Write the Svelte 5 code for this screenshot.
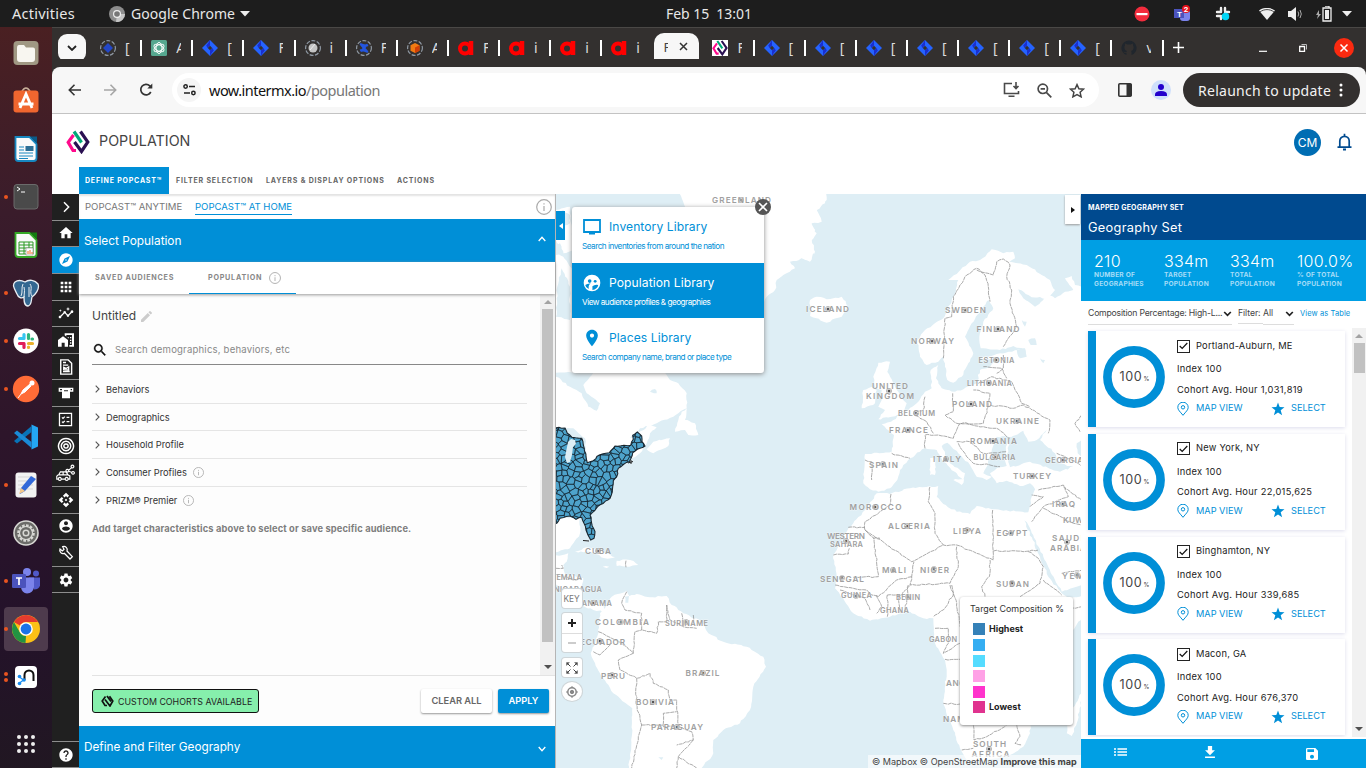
<script>
  let seed = 7;
  const rnd = () => {
    seed = (seed * 16807) % 2147483647;
    return seed / 2147483647 - 0.5;
  };

  // Turns "x,y x,y ..." in thirds of a pixel from an origin into an irregular coastline.
  function trace([ox, oy], text, amp = 1.6, closed = true) {
    const pts = text.trim().split(/\s+/).map((p) => {
      const [x, y] = p.split(',').map(Number);
      return [ox + x / 3, oy + y / 3];
    });
    const out = [];
    const n = closed ? pts.length : pts.length - 1;
    for (let i = 0; i < n; i++) {
      const a = pts[i];
      const b = pts[(i + 1) % pts.length];
      const k = Math.max(1, Math.round(Math.hypot(b[0] - a[0], b[1] - a[1]) / 3));
      out.push(a);
      for (let j = 1; j < k; j++) {
        const t = j / k;
        out.push([a[0] + (b[0] - a[0]) * t + rnd() * amp, a[1] + (b[1] - a[1]) * t + rnd() * amp]);
      }
    }
    if (!closed) out.push(pts[pts.length - 1]);
    return 'M' + out.map((p) => p[0].toFixed(1) + ' ' + p[1].toFixed(1)).join('L') + (closed ? 'Z' : '');
  }

  const NW = [550, 190];
  const NE = [810, 190];
  const SW = [550, 470];
  const SE = [810, 470];

  const land = [
    [NW, '385,0 825,0 830,30 800,60 815,95 785,100 800,130 780,160 795,190 760,205 720,215 735,235 700,255 680,270 675,300 650,320 630,350 600,380 560,330 500,200 420,120 405,50'],
    [NE, '0,10 40,15 45,40 20,60 15,90 0,100 15,120 5,150 15,185 0,215 -40,200 -60,20'],
    [NW, '0,180 40,200 70,240 120,400 345,548 360,570 385,580 410,610 410,655 370,680 320,700 270,715 240,745 300,705 320,712 300,730 290,760 270,790 200,830 120,860 0,860'],
    [NW, '18,60 60,50 70,180 40,190 18,150'],
    [NW, '375,725 395,665 410,655 405,690 435,700 445,735 415,735 405,720'],
    [NW, '290,778 310,755 360,745 355,768 310,790'],
    [NE, '0,330 20,320 50,328 95,320 115,350 95,380 50,398 0,378'],
    [NE, '205,518 240,515 232,545 240,560 255,590 275,625 290,640 282,670 245,680 205,688 225,660 205,650 215,630 215,600 195,590 190,560'],
    [NE, '185,590 200,600 195,640 155,655 160,600'],
    [NE, '415,270 440,252 480,215 510,210 545,178 580,190 610,185 615,205 598,215 650,225 720,270 735,300 715,325 665,322 625,298 640,325 675,350 700,330 705,308 735,325 765,305 790,300 765,265 785,258 795,285 815,290 815,900 680,905 660,880 630,888 590,872 560,880 540,850 560,835 590,828 585,800 590,765 605,740 560,740 530,830 520,850 545,860 530,870 500,860 480,825 445,790 412,758 395,768 420,820 465,850 460,870 440,850 400,815 380,780 345,775 300,805 270,840 262,870 240,895 205,905 180,898 160,880 165,792 245,785 252,735 215,703 250,690 285,665 320,640 345,605 365,595 362,540 385,525 378,565 395,595 435,605 500,580 510,540 540,530 560,510 510,505 560,492 640,478 610,468 570,480 512,475 508,440 520,395 550,355 535,330 520,350 485,400 465,440 490,490 475,520 455,560 430,578 412,570 405,530 400,500 385,515 350,525 330,500 322,450 345,420 400,385 430,320 445,270'],
    [SE, '200,70 240,72 300,55 385,48 380,80 400,102 440,125 480,132 500,108 545,118 655,127 665,80 680,45 760,20 815,0 815,345 755,365 735,330 700,260 655,165 640,145 690,260 715,320 755,370 775,385 815,378 815,440 785,490 700,600 665,700 660,790 640,830 600,855 520,872 470,870 450,835 430,780 400,700 410,610 405,570 375,520 370,445 340,445 300,425 240,440 180,452 130,430 75,355 80,320 70,255 115,175 165,120'],
    [SE, '770,745 770,790 785,798 800,760 815,690 815,670'],
    [NE, '360,805 375,805 375,855 360,855'],
    [NE, '430,870 462,868 455,885'],
    [SW, '160,420 185,380 230,362 238,378 260,372 300,382 350,378 365,405 400,430 455,455 475,490 520,515 590,530 640,560 648,590 610,650 600,720 570,760 520,780 490,810 490,850 455,894 235,910 245,800 247,715 190,670 150,610 130,570 122,550 145,490 150,430'],
    [SW, '0,262 55,250 50,275 40,285 45,312 100,325 90,370 100,395 130,400 165,400 160,425 130,420 80,400 30,350 0,330'],
    [SW, '75,245 110,232 150,240 195,262 165,265 120,245'],
    [SW, '200,272 240,270 265,285 230,290 200,288'],
    [SW, '158,290 178,290 170,294'],
    [SW, '0,140 90,145 90,190 60,235 0,250']
  ].map(([o, t]) => trace(o, t));

  const water = [
    [NW, '18,548 130,548 100,585 110,610 150,640 140,662 115,650 95,610 60,590 18,560'],
    [NW, '18,70 40,60 60,75 60,100 35,110'],
    [NW, '18,165 30,160 40,190 18,195'],
    [NW, '35,235 60,290 60,390 18,380 22,290'],
    [NW, '38,712 70,715 105,745 112,800 70,745 45,730'],
    [NW, '300,605 315,597 320,610'],
    [NE, '600,745 640,722 655,755 680,750 710,720 690,750 735,790 745,820 790,830 750,845 660,815 600,832 590,800'],
    [NE, '620,480 645,475 650,500 630,505'],
    [NE, '655,450 675,445 680,465 662,465'],
    [NE, '635,390 650,395 645,410'],
    [NE, '690,505 705,510 700,520'],
    [SW, '225,380 237,378 235,398 226,398'],
    [SW, '325,862 340,862 335,870'],
    [NE, '800,760 815,750 815,800 803,790']
  ].map(([o, t]) => trace(o, t));

  const borders = [
    [NE, '400,505 405,385 425,380 430,320 450,285 470,255 500,235 525,255 535,290 540,335'],
    [NE, '500,240 550,255 560,215 580,207 600,225 590,260 605,300 600,340 620,410 580,470'],
    [NE, '345,775 345,735 385,735 430,745 450,700 520,710 560,715 600,745'],
    [NE, '345,620 340,660 310,670 330,685 350,695 370,730'],
    [NE, '428,610 430,665 405,675 440,700 520,700 535,650 540,610 490,600'],
    [NE, '540,645 610,655 640,645 720,690 715,730'],
    [NE, '505,580 545,560 605,575 635,640 660,650'],
    [NE, '520,530 575,535 590,565'],
    [NE, '440,755 480,755 520,790 590,785'],
    [NE, '445,760 470,800 490,820 540,825 570,830'],
    [NE, '245,790 300,805'],
    [NE, '165,810 185,815 185,870'],
    [NE, '740,790 790,810 815,830'],
    [NE, '580,495 580,535 560,550'],
    [NE, '815,675 795,700 810,725'],
    [SE, '243,72 240,105 165,155 165,180 305,275 400,225 375,190 375,130 355,95 360,50'],
    [SE, '115,172 165,172'],
    [SE, '70,255 115,252 118,235'],
    [SE, '165,180 192,205 205,320 130,322'],
    [SE, '190,205 210,205'],
    [SE, '548,120 550,270 540,265 440,225 400,225'],
    [SE, '550,243 650,244 685,240'],
    [SE, '540,270 538,320 515,350 525,380'],
    [SE, '440,230 445,290 420,340 300,345 305,320 312,275'],
    [SE, '305,320 260,330 205,380 185,375 170,360 130,355 75,345'],
    [SE, '420,345 430,375 400,420 370,440'],
    [SE, '232,375 232,440'],
    [SE, '265,375 270,430'],
    [SE, '295,345 290,400 283,425'],
    [SE, '232,375 275,375 300,345'],
    [SE, '375,475 415,475 415,520 400,550 450,520'],
    [SE, '405,568 450,568'],
    [SE, '400,700 450,702'],
    [SE, '490,765 492,810 530,800 590,765'],
    [SE, '455,840 490,835'],
    [SE, '620,765 630,800 615,820 635,825'],
    [SE, '685,60 760,45 775,80 700,110 665,155'],
    [SE, '660,110 700,80 665,75'],
    [SE, '700,115 790,160 815,165'],
    [SE, '655,245 685,265 700,290 690,340 630,380'],
    [SE, '700,330 755,375'],
    [SE, '755,310 815,300'],
    [SE, '760,50 815,90'],
    [SE, '780,415 815,410'],
    [SE, '90,360 130,375 165,385 180,420'],
    [SE, '200,375 215,410 200,430'],
    [SE, '425,345 440,400 450,470'],
    [SW, '230,365 215,400 225,420 275,430 275,480 320,490 325,455 350,455 350,405'],
    [SW, '350,405 360,450 400,470 440,475'],
    [SW, '395,430 400,470'],
    [SW, '430,435 428,465'],
    [SW, '145,485 185,505 230,530 250,550 255,485 275,480'],
    [SW, '130,545 150,555 185,520'],
    [SW, '250,550 205,570 210,600 260,625 300,610 310,640 355,660 360,690 380,690 385,765 340,770 340,730 380,725'],
    [SW, '260,625 258,700 275,765 265,800 245,894'],
    [SW, '275,765 340,765'],
    [SW, '380,765 425,785 430,810 380,825'],
    [SW, '430,810 385,860 440,894'],
    [SW, '385,860 380,894'],
    [SW, '18,295 40,295 35,285'],
    [SW, '50,320 70,330 95,325'],
    [SW, '228,272 228,292']
  ].map(([o, t]) => trace(o, t, 1.4, false));

  const usa = trace(NW, '0,712 45,714 52,730 66,742 95,745 100,765 108,800 112,818 130,812 148,795 178,788 195,768 242,766 250,748 248,736 262,726 275,738 276,755 285,768 262,778 248,788 243,805 238,815 222,822 205,835 200,860 190,872 188,890 184,915 180,925 145,948 120,975 125,1000 135,1025 132,1045 122,1050 108,1020 102,1000 95,982 78,988 60,978 30,985 20,1000 0,992', 1.2);

  // County mesh: Voronoi cells around shaken lattice sites.
  const mesh = (() => {
    const sites = [];
    for (let r = 0; r < 23; r++)
      for (let c = 0; c < 18; c++) sites.push([548 + (c + (r % 2) / 2) * 6.2 + rnd() * 6, 422 + r * 5.8 + rnd() * 5.5]);
    let d = '';
    for (const s of sites) {
      let poly = [[s[0] - 8, s[1] - 8], [s[0] + 8, s[1] - 8], [s[0] + 8, s[1] + 8], [s[0] - 8, s[1] + 8]];
      for (const t of sites) {
        const dx = t[0] - s[0];
        const dy = t[1] - s[1];
        if (t === s || dx * dx + dy * dy > 500) continue;
        const side = (p) => (p[0] - (s[0] + t[0]) / 2) * dx + (p[1] - (s[1] + t[1]) / 2) * dy;
        const next = [];
        for (let i = 0; i < poly.length; i++) {
          const a = poly[i];
          const b = poly[(i + 1) % poly.length];
          const fa = side(a);
          const fb = side(b);
          if (fa <= 0) next.push(a);
          if (fa * fb < 0) next.push([a[0] + ((b[0] - a[0]) * fa) / (fa - fb), a[1] + ((b[1] - a[1]) * fa) / (fa - fb)]);
        }
        poly = next;
      }
      if (poly.length > 2) d += 'M' + poly.map((p) => p[0].toFixed(1) + ' ' + p[1].toFixed(1)).join('L') + 'Z';
    }
    return d;
  })();

  // name, left, baseline, width, marker x, marker y
  const labels = [
    ['GREENLAND', 712, 203, 59, 741, 200], ['ICELAND', 806, 312, 43, 828, 309], ['SWEDEN', 945, 312.5, 41, 965, 310],
    ['FINLAND', 976.5, 331.5, 43, 998, 329], ['NORWAY', 911, 344, 43, 932, 341], ['ESTONIA', 978.5, 362.5, 36, 996, 360, 1],
    ['LITHUANIA', 967, 385.5, 45, 989, 383, 1], ['UNITED', 872, 389, 36], ['KINGDOM', 866, 398.5, 48, 889, 391],
    ['POLAND', 952, 407, 40, 971, 404], ['BELGIUM', 898, 416, 37, 916, 413, 1], ['FRANCE', 889, 432.5, 39, 908, 430],
    ['UKRAINE', 996, 424, 43, 1017, 421], ['ROMANIA', 970, 443.5, 47, 993, 441], ['ITALY', 933, 461.5, 28, 946, 459],
    ['BULGARIA', 973.5, 459.5, 42, 995, 457, 1], ['GEORGIA', 1045, 462.5, 38, 1063, 460, 1], ['SPAIN', 869, 467.5, 29, 883, 464],
    ['TURKEY', 1013, 478.5, 38, 1032, 476], ['IRAQ', 1052, 507, 23, 1063, 504], ['KUWAIT', 1063, 523, 34],
    ['MOROCCO', 849.5, 510, 52, 875, 507], ['ALGERIA', 888, 528.5, 42, 907, 526], ['LIBYA', 953, 533.5, 28, 967, 530],
    ['EGYPT', 996.5, 535.5, 31, 1011, 533], ['WESTERN', 827, 539, 38], ['SAHARA', 830, 547, 33, 846, 541, 1],
    ['SAUDI', 1052, 540.5, 31, 1067, 542], ['ARABIA', 1050, 550.5, 36], ['YEMEN', 1062, 579, 36, 1077, 575],
    ['MALI', 882, 573, 24, 893, 570], ['NIGER', 920, 572.5, 29, 934, 569], ['SENEGAL', 820, 581.5, 44, 842, 578],
    ['SUDAN', 996, 586.5, 33, 1012, 583], ['GUINEA', 841, 598, 31, 856, 596, 1], ['BENIN', 896, 599.5, 24, 908, 597, 1],
    ['GHANA', 880, 613, 29, 0, 0, 1], ['GABON', 929, 641.5, 28, 0, 0, 1], ['ANGOLA', 946, 686, 38], ['NAMIBIA', 943, 722, 42],
    ['SOUTH', 973, 747, 33], ['AFRICA', 971.5, 756.5, 38, 989, 749], ['CUBA', 585, 554, 26, 598, 551],
    ['GUATEMALA', 537, 579.5, 45, 0, 0, 1], ['NICARAGUA', 554, 592, 48, 0, 0, 1], ['PANAMA', 577, 606, 35, 593, 603, 1],
    ['COLOMBIA', 595, 625, 54, 621, 622], ['SURINAME', 665, 625.5, 43, 686, 622, 1], ['ECUADOR', 580, 644.5, 45, 600, 641],
    ['PERU', 601, 678.5, 24, 612, 675], ['BRAZIL', 685.5, 676, 34, 703, 673], ['BOLIVIA', 636, 705, 38, 653, 702], ['PARAGUAY', 651, 730, 52, 677, 727]
  ];

  const jira = (n) => Array.from({ length: n }, () => ['jira', '[']);
  const tabs = [['ring', '['], ['gpt', 'A'], ['jira', '['], ['jira', 'F'], ['globe', 'i'], ['conf', 'F'], ['cube', 'A'], ['a', 'F'], ['a', 'i'], ['a', 'i'], ['a', 'i'], ['active', 'F'], ['imx', 'F'], ...jira(7), ['git', 'v']];

  const dock = [['files', 0], ['store', 0], ['writer', 0], ['term', 1], ['calc', 0], ['pg', 1], ['slack', 1], ['postman', 1], ['code', 0], ['note', 1], ['gear', 0], ['teams', 1], ['chrome', 1], ['neo', 2]];

  const cog = 'M19.14 12.94c.04-.3.06-.61.06-.94 0-.32-.02-.64-.07-.94l2.03-1.58c.18-.14.23-.41.12-.61l-1.92-3.32c-.12-.22-.37-.29-.59-.22l-2.39.96c-.5-.38-1.03-.7-1.62-.94l-.36-2.54c-.04-.24-.24-.41-.48-.41h-3.84c-.24 0-.43.17-.47.41l-.36 2.54c-.59.24-1.13.57-1.62.94l-2.39-.96c-.22-.08-.47 0-.59.22L2.74 8.87c-.12.21-.08.47.12.61l2.03 1.58c-.05.3-.09.63-.09.94s.02.64.07.94l-2.03 1.58c-.18.14-.23.41-.12.61l1.92 3.32c.12.22.37.29.59.22l2.39-.96c.5.38 1.03.7 1.62.94l.36 2.54c.05.24.24.41.48.41h3.84c.24 0 .44-.17.47-.41l.36-2.54c.59-.24 1.13-.56 1.62-.94l2.39.96c.22.08.47 0 .59-.22l1.92-3.32c.12-.22.07-.47-.12-.61l-2.01-1.58zM12 15.6c-1.98 0-3.6-1.62-3.6-3.6s1.62-3.6 3.6-3.6 3.6 1.62 3.6 3.6-1.62 3.6-3.6 3.6z';
  const helpPath = 'M12 2C6.48 2 2 6.48 2 12s4.48 10 10 10 10-4.48 10-10S17.52 2 12 2zm1 17h-2v-2h2v2zm2.07-7.75l-.9.92C13.45 12.9 13 13.5 13 15h-2v-.5c0-1.1.45-2.1 1.17-2.83l1.24-1.26c.37-.36.59-.86.59-1.41 0-1.1-.9-2-2-2s-2 .9-2 2H8c0-2.21 1.79-4 4-4s4 1.79 4 4c0 .88-.36 1.68-.93 2.25z';
  const side = [
    { s: 'M9 5l7 7-7 7' },
    { f: 'M10 20v-6h4v6h5v-8h3L12 3 2 12h3v8z' },
    { on: true, f: 'M12 10.9c-.61 0-1.1.49-1.1 1.1s.49 1.1 1.1 1.1c.61 0 1.1-.49 1.1-1.1s-.49-1.1-1.1-1.1zM12 2C6.48 2 2 6.48 2 12s4.48 10 10 10 10-4.48 10-10S17.52 2 12 2zm2.19 12.19L6 18l3.81-8.19L18 6l-3.81 8.19z' },
    { f: 'M4 8h4V4H4v4zm6 12h4v-4h-4v4zm-6 0h4v-4H4v4zm0-6h4v-4H4v4zm6 0h4v-4h-4v4zm6-10v4h4V4h-4zm-6 4h4V4h-4v4zm6 6h4v-4h-4v4zm0 6h4v-4h-4v4z' },
    { size: 16, f: 'M21 8c-1.45 0-2.26 1.44-1.93 2.51l-3.55 3.56c-.3-.09-.74-.09-1.04 0l-2.55-2.55C12.27 10.45 11.46 9 10 9c-1.45 0-2.27 1.44-1.93 2.52l-4.56 4.55C2.44 15.74 1 16.55 1 18c0 1.1.9 2 2 2 1.45 0 2.26-1.44 1.93-2.51l4.55-4.56c.3.09.74.09 1.04 0l2.55 2.55C12.73 16.55 13.54 18 15 18c1.45 0 2.27-1.44 1.93-2.52l3.56-3.55C21.56 12.26 23 11.45 23 10c0-1.1-.9-2-2-2zM15 9l.94-2.07L18 6l-2.06-.93L15 3l-.92 2.07L12 6l2.08.93zM3.5 11L4 9l2-.5L4 8l-.5-2L3 8l-2 .5L3 9z' },
    { size: 16, f: 'M0 12L7.500 6.500l7.500 5.500V22h-5v-6H5.500v6H0zM10 2v2.800l2.500 1.800V4.500H21v15h-4V22h7V2zM14.500 7.500v1l1.500 1.200V7.500zM18 7.500v2h2v-2zM18 11.500v2h2v-2zM18 15.500v2h2v-2z' },
    { size: 18, s: 'M5 2.500h10l4.500 4.500v14.500H5zM8 6h4M8 9.500h7M8 18h9M9 15.500v-3l3 1.500 3.500-2v4z', w: 1.9 },
    { size: 16, f: 'M1 4h22v6h-5v10H6V10H1zM3 6v2h3V6zM19 6v2h2V6zM9 8v1.500h6V8z' },
    { size: 17, s: 'M3.500 3.500h17v17h-17zM7 9l1.500 1.500L11 8M13.500 9h4M7 15l1.500 1.500L11 14M13.500 15h4', w: 1.8 },
    { size: 18, s: 'M12 2a10 10 0 1 0 .01 0M12 5.800a6.200 6.200 0 1 0 .01 0M12 9.200a2.800 2.800 0 1 0 .01 0', w: 2 },
    { size: 19, s: 'M1 15l2.500-1.500L5.500 10h7l3 4 2 1v4h-2M1 15v4h1.500M7 19h4.500M4.800 17a1.900 1.900 0 1 0 .01 0M13.500 17a1.900 1.900 0 1 0 .01 0M4 13.800h11M9 10v3.500M15.500 8.300l4.500-4M16 9.200l4.500 1.500M14.300 6.800a1.700 1.700 0 1 0 .01 0M20.800 1.500a1.700 1.700 0 1 0 .01 0M21.500 9.500a1.700 1.700 0 1 0 .01 0', w: 1.5 },
    { f: 'M14 12l-2 2-2-2 2-2 2 2zm-2-6l2.120 2.120 2.500-2.500L12 1 7.380 5.620l2.500 2.500L12 6zm-6 6l2.120-2.120-2.500-2.500L1 12l4.620 4.620 2.500-2.500L6 12zm12 0l-2.120 2.120 2.500 2.500L23 12l-4.620-4.620-2.500 2.500L18 12zm-6 6l-2.120-2.120-2.500 2.500L12 23l4.620-4.620-2.500-2.500L12 18z' },
    { f: 'M12 2C6.48 2 2 6.48 2 12s4.48 10 10 10 10-4.48 10-10S17.52 2 12 2zm0 3c1.660 0 3 1.340 3 3s-1.340 3-3 3-3-1.340-3-3 1.340-3 3-3zm0 14.200c-2.500 0-4.710-1.280-6-3.220.030-1.990 4-3.080 6-3.080 1.990 0 5.970 1.090 6 3.080-1.290 1.940-3.500 3.220-6 3.220z' },
    { s: 'M7 2.500a5 5 0 0 1 6.500 6.500l8 8.500-3.500 3.500-8.500-8.500A5 5 0 0 1 3 6l3.500 3L9 6.500z', w: 1.9 },
    { f: cog }
  ];

  const rows = [['Behaviors', 0], ['Demographics', 0], ['Household Profile', 0], ['Consumer Profiles', 1], ['PRIZM® Premier', 1]];
  const stats = [['210', 'NUMBER OF', 'GEOGRAPHIES'], ['334m', 'TARGET', 'POPULATION'], ['334m', 'TOTAL', 'POPULATION'], ['100.0%', '% OF TOTAL', 'POPULATION']];
  const cards = [['Portland-Auburn, ME', '1,031,819'], ['New York, NY', '22,015,625'], ['Binghamton, NY', '339,685'], ['Macon, GA', '676,370']];
  const swatches = ['#3581b8', '#35aef2', '#55dcff', '#ffa1e6', '#ff33cc', '#e0338f'];
  const place = 'M12 2C8.130 2 5 5.130 5 9c0 5.250 7 13 7 13s7-7.750 7-13c0-3.870-3.130-7-7-7zm0 9.500c-1.380 0-2.500-1.120-2.500-2.500s1.120-2.500 2.500-2.500 2.500 1.120 2.500 2.500-1.120 2.500-2.500 2.500z';
</script>

{#snippet info(size)}
  <svg class="info" width={size} height={size} viewBox="0 0 16 16"><circle cx="8" cy="8" r="7.300" /><path d="M8 7v5M8 4.200v1.400" /></svg>
{/snippet}

{#snippet logo(size)}
  <svg width={size} height={size} viewBox="0 0 24 24" fill="none" stroke-width="3.200">
    <path d="M7.500 5L2.200 12.300 7 20.500h3" stroke="#ff0a8c" /><path d="M8 1.500l7.500 11" stroke="#00a878" />
    <path d="M14.500 1.500l7.300 10.500-6.300 9.500-7-9.500" stroke="#2a1052" />
  </svg>
{/snippet}

{#snippet jiraIcon()}
  <svg width="16" height="16" viewBox="0 0 16 16"><path d="M8 0l8 8-8 8-8-8z" fill="#2563ff" /><path d="M8 0v5.500L5.500 8 4.200 5.500 6 3.300zM8 16v-5.500L10.500 8l1.300 2.500-1.800 2.200z" fill="#1a2fd0" /><path d="M8 5.800L10.200 8 8 10.200 5.800 8z" fill="#33302f" /></svg>
{/snippet}

<div class="desktop">
  <div class="topbar">
    <span class="activities">Activities</span>
    <svg class="tc" width="16" height="16" viewBox="0 0 16 16"><circle cx="8" cy="8" r="8" fill="#8d8d8d" /><path d="M8 8h8a8 8 0 0 1-9 8z" fill="#c5c5c5" /><circle cx="8" cy="8" r="4" fill="#eee" /><circle cx="8" cy="8" r="2.800" fill="#777" /></svg>
    <span class="appname">Google Chrome</span>
    <svg width="10" height="6" viewBox="0 0 10 6"><path d="M0 0h10L5 5.500z" fill="#eee" /></svg>
    <span class="clock">Feb 15&nbsp; 13:01</span>
    <div class="tray">
      <svg width="16" height="16" viewBox="0 0 16 16"><circle cx="8" cy="8" r="7.500" fill="#f22c3d" /><path d="M2.500 7h11v2.200h-11z" fill="#fff" /></svg>
      <svg class="t2" width="17" height="17" viewBox="0 0 17 17"><rect x="6" y="5" width="10" height="11" rx="3" fill="#7b83eb" /><rect x="0" y="4" width="10" height="9" fill="#4b53bc" /><text x="3" y="11.500" font-size="8" font-weight="700" fill="#fff">T</text><circle cx="12" cy="4" r="4" fill="#e8121c" /><text x="9.800" y="7" font-size="8" font-weight="700" fill="#fff">2</text></svg>
      <svg class="t3" width="16" height="16" viewBox="0 0 16 16" stroke="#eee" stroke-width="2.400" stroke-linecap="round"><path d="M6 2v4M10 2v3M2 6h3M10 6h4M2 10h4M6 10v3" /><circle cx="10.500" cy="10.500" r="3" fill="#00d5f5" stroke="#00d5f5" stroke-width="1.500" /></svg>
      <svg class="t4" width="16" height="12" viewBox="0 0 16 12"><path d="M0 2.500C4.500-1 11.500-1 16 2.500L8 12z" fill="#eee" /><path d="M1 4C5 .8 11 .8 15 4" fill="none" stroke="#1d1d1d" stroke-width=".8" /></svg>
      <svg class="t5" width="16" height="14" viewBox="0 0 16 14"><path d="M0 4h3l5-4v14l-5-4H0z" fill="#eee" /><path d="M10 4.500q1.500 2.500 0 5M12 3q2.600 4 0 8" fill="none" stroke="#aaa" /></svg>
      <svg class="t6" width="16" height="16" viewBox="0 0 16 16"><path d="M3 4L0 9h2l-1 4 4-5H3z" fill="#aaa" /><path d="M7 2h8v13H7zM9 0h4v2" fill="none" stroke="#eee" stroke-width="1.300" /><path d="M9 4h4v9H9z" fill="#eee" /></svg>
      <svg class="t7" width="10" height="6" viewBox="0 0 10 6"><path d="M0 0h10L5 5.500z" fill="#eee" /></svg>
    </div>
  </div>

  <div class="below">
    <div class="dock">
      {#each dock as [name, dots]}
        <div class="slot" class:current={name === 'chrome'}>
          <span class="dots">{#each Array(dots) as _}<i></i>{/each}</span>
          <svg width="28" height="28" viewBox="0 0 28 28">
            {#if name === 'files'}
              <rect x="1.500" y="2" width="25" height="24" rx="4" fill="#a09883" /><path d="M5 9q0-3 2-3h5l2 2.500h7q2 0 2 2V20q0 3-3 3H8q-3 0-3-3z" fill="#f8f6f0" />
            {:else if name === 'store'}
              <path d="M9.500 5q4.500-8 9 0" fill="none" stroke="#c8b09a" stroke-width="1.500" /><rect x="1.500" y="3.500" width="25" height="22" rx="3" fill="#f0662f" /><path d="M8 21l6-14 6 14M6.500 17h15" fill="none" stroke="#fff" stroke-width="2.800" />
            {:else if name === 'writer' || name === 'calc'}
              <path d="M3.500 2h14l7 7v14q0 3-3 3h-15q-3 0-3-3z" fill="#fafafa" stroke={name === 'writer' ? '#1787c0' : '#35a827'} stroke-width="1.800" /><path d="M18 1.500h7v7z" fill={name === 'writer' ? '#0b5a88' : '#137a10'} />
              {#if name === 'writer'}<path d="M7 12h5M7 15h5M7 18h14M7 21h14M7 23.500h9" stroke="#1787c0" /><rect x="13.500" y="11" width="8" height="5" fill="#2d6f96" />
              {:else}<path d="M7 11h14v12H7zM7 14h14M7 17h14M7 20h14M12 11v12M17 11v12" fill="none" stroke="#2a9a22" /><rect x="14" y="17" width="7" height="7" fill="#fff" stroke="#888" stroke-width=".6" /><path d="M16 23v-3M18 23v-4M20 23v-2" stroke="#f06b22" />{/if}
            {:else if name === 'term'}
              <rect x="2" y="1.500" width="24" height="24.500" rx="3" fill="#4a4a4a" stroke="#6b6b6b" /><path d="M5 4l3 2-3 2M9 9h4" fill="none" stroke="#fff" />
            {:else if name === 'pg'}
              <path d="M3 3c4-3 8-1 10 0 4-3 10-2 13 2 2 5-3 11-6 13-1 3 0 8-4 9-4 0-4-5-4-9-3 2-6 0-7-3C2 9 0 6 3 3z" fill="#336791" stroke="#e8edf2" stroke-width="1.300" /><path d="M11 5c-2 4 0 8-2 12M18 5c3 4-1 8 2 12M12 8q1 2 0 10M17 8v10" fill="none" stroke="#e8edf2" />
            {:else if name === 'slack'}
              <circle cx="14" cy="14" r="12.500" fill="#fff" /><g stroke-width="3.200" stroke-linecap="round"><path d="M12 7.500v4M7.500 11.500h3" stroke="#36c5f0" /><path d="M16.500 7.500v4M20.500 12h-.5" stroke="#2eb67d" /><path d="M16.500 16.500h4M16.500 20.500v-.5" stroke="#ecb22e" /><path d="M7.500 16.500h4M12 20.500v-4" stroke="#e01e5a" /></g>
            {:else if name === 'postman'}
              <circle cx="14" cy="14" r="13.200" fill="#ff6c37" /><circle cx="20" cy="8" r="2.500" fill="#fff" /><path d="M18 9l-7 6-2 4 4-2 6-6zM9 19l-3 4" fill="#fff" stroke="#fff" />
            {:else if name === 'code'}
              <path d="M19.500 1.500L26 4.500v19l-6.500 3z" fill="#24a6f2" /><path d="M19.500 3v6L5 20.500l-3-2.500z" fill="#0873b8" /><path d="M19.500 25v-6L5 7.500 2 10z" fill="#1a8ad6" />
            {:else if name === 'note'}
              <rect x="3.500" y="1.500" width="21" height="25" rx="3" fill="#f2f2f2" /><path d="M6 6h15M6 10h15M6 14h15M6 18h15" stroke="#d5d5d5" /><path d="M19 5l5 3-11 12-5 3 1-6z" fill="#3168d8" /><path d="M9 17l4 3-6 3z" fill="#f5c88a" />
            {:else if name === 'gear'}
              <circle cx="14" cy="14" r="12" fill="#6b6b68" stroke="#d8d8d4" stroke-width="1.600" /><circle cx="14" cy="14" r="7.500" fill="none" stroke="#d8d8d4" stroke-width="2.600" stroke-dasharray="2.600 1.300" /><circle cx="14" cy="14" r="6.500" fill="none" stroke="#d8d8d4" stroke-width="1.200" /><circle cx="14" cy="14" r="2.800" fill="none" stroke="#d8d8d4" stroke-width="1.500" />
            {:else if name === 'teams'}
              <circle cx="15" cy="5" r="4" fill="#7b83eb" /><circle cx="24" cy="6.500" r="3" fill="#5059c9" /><path d="M17 10.500h11v8q-1 4-6 4z" fill="#5059c9" /><path d="M9 10.500h13V20q-1 6-7 6.500-5-.5-6-6z" fill="#7b83eb" /><rect x="0" y="7" width="14" height="14" rx="1.300" fill="#4b53bc" /><path d="M4 11h6M7 11v7" stroke="#fff" stroke-width="1.700" />
            {:else if name === 'chrome'}
              <circle cx="14" cy="14" r="14" fill="#fbc116" /><path d="M1.900 7A14 14 0 0 1 26.100 7H14a7 7 0 0 0-6.100 3.500z" fill="#e33b2e" /><path d="M1.900 7l6 10.500A7 7 0 0 0 14 21l-.5 7A14 14 0 0 1 1.900 7z" fill="#229342" /><path d="M14 28l6-10.500-6 3.500z" fill="#fbc116" /><circle cx="14" cy="14" r="6.800" fill="#fff" /><circle cx="14" cy="14" r="5.400" fill="#1a73e8" />
            {:else}
              <rect x="3" y="3" width="22" height="22" rx="4" fill="#fff" /><path d="M12.500 17v-5a4.500 4.500 0 0 1 9 0v6" fill="none" stroke="#111" stroke-width="2" /><path d="M7.500 14l4 3-4 3" fill="none" stroke="#1a8cf0" stroke-width="1.300" /><circle cx="7.500" cy="13.500" r="1.800" fill="#1a8cf0" /><circle cx="12" cy="17" r="1.800" fill="#1a8cf0" /><circle cx="7.500" cy="20.500" r="1.800" fill="#1a8cf0" />
            {/if}
          </svg>
        </div>
      {/each}
      <svg class="grid9" width="20" height="20" viewBox="0 0 20 20" fill="#eee">{#each [3, 10, 17] as y}{#each [3, 10, 17] as x}<circle cx={x} cy={y} r="2" />{/each}{/each}</svg>
    </div>

    <div class="browser">
      <div class="tabstrip">
        <div class="search-tabs"><svg width="10" height="6" viewBox="0 0 10 6"><path d="M1 1l4 4 4-4" fill="none" stroke="#222" stroke-width="1.800" /></svg></div>
        {#each tabs as [kind, letter], i}
          {#if kind === 'active'}
            <div class="active-tab"><span class="cut">F</span><svg width="9" height="9" viewBox="0 0 9 9"><path d="M1 1l7 7M8 1L1 8" stroke="#333" stroke-width="1.500" /></svg></div>
          {:else}
            <div class="tab" class:nosep={i === 10}>
              {#if kind === 'jira'}{@render jiraIcon()}
              {:else if kind === 'a'}<svg width="16" height="16" viewBox="0 0 16 16" fill="none" stroke="#f00" stroke-width="4"><circle cx="7" cy="8.500" r="5" /><path d="M13 1v14" stroke-width="4.500" /></svg>
              {:else if kind === 'imx'}<span class="imx">{@render logo(16)}</span>
              {:else if kind === 'gpt'}<svg width="16" height="16" viewBox="0 0 16 16"><rect width="16" height="16" rx="1.500" fill="#56a78f" /><g fill="none" stroke="#fff"><ellipse cx="8" cy="8" rx="3" ry="5.500" /><ellipse cx="8" cy="8" rx="3" ry="5.500" transform="rotate(60 8 8)" /><ellipse cx="8" cy="8" rx="3" ry="5.500" transform="rotate(120 8 8)" /></g></svg>
              {:else if kind === 'git'}<svg width="16" height="16" viewBox="0 0 16 16"><path d="M8 .5a7.500 7.500 0 0 0-2.500 14.600V13c-2 .4-2.600-1-3-1.500 1.500 0 1.500 1.200 3 .7 0-1 .5-1.300.5-1.300C3 10.500 3 6.500 4 5.500 3.800 5 4 4 4.200 3.500 5 3.500 6 4.500 6 4.500h4s1-1 1.800-1c.2.500.4 1.500.2 2 1 1 1 5-2 5.400.5.5.5 1 .5 1.600v2.600A7.500 7.500 0 0 0 8 .5z" fill="#20262d" /></svg>
              {:else}<svg width="16" height="16" viewBox="0 0 16 16"><circle cx="8" cy="8" r="7.400" fill="none" stroke="#8f98a3" stroke-width="1.200" stroke-dasharray="4 1.500" />
                {#if kind === 'ring'}<path d="M8 3l5 5-5 5-5-5z" fill="#2347c8" />{:else if kind === 'globe'}<circle cx="8" cy="8" r="4.500" fill="#c4c4c4" /><path d="M5 10l5-6" stroke="#eee" />{:else if kind === 'conf'}<path d="M4 10.500q3-1 8 1.500M4 4q5 2.500 8 1M5 4.500l6 7M11 4.500l-6 7" stroke="#2456e0" stroke-width="2.300" fill="none" />{:else}<path d="M8 3l4.500 2.200v5.600L8 13l-4.500-2.200V5.200z" fill="#f07a12" /><path d="M8 7.500v5.500l4.500-2.200V5.200z" fill="#d13e06" />{/if}</svg>{/if}
              <span class="cut">{letter}</span>
            </div>
          {/if}
        {/each}
        <svg class="plus" width="11" height="11" viewBox="0 0 11 11"><path d="M5.500 0v11M0 5.500h11" stroke="#fff" stroke-width="1.600" /></svg>
        <div class="winctl">
          <svg width="8" height="9" viewBox="0 0 8 9"><path d="M0 8.300h8" stroke="#fff" stroke-width="1.200" /></svg>
          <svg width="8" height="8" viewBox="0 0 8 8" fill="none"><path d="M.7 2.500h4.800v4.800H.7z" stroke="#fff" stroke-width="1.300" /><path d="M2.500.5h5v5" stroke="#bbb" /></svg>
          <svg width="20" height="20" viewBox="0 0 20 20"><circle cx="10" cy="10" r="10" fill="#fb2a10" /><path d="M6.500 6.500l7 7M13.500 6.500l-7 7" stroke="#fff" stroke-width="1.500" /></svg>
        </div>
      </div>

      <div class="toolbar">
        <svg class="back" width="13" height="12" viewBox="0 0 13 12" fill="none" stroke="#333" stroke-width="1.600"><path d="M13 6H1.500M6.500.8L1.300 6l5.200 5.200" /></svg>
        <svg class="fwd" width="13" height="12" viewBox="0 0 13 12" fill="none" stroke="#a6a6a6" stroke-width="1.600"><path d="M0 6h11.500M6.500.8L11.700 6l-5.200 5.200" /></svg>
        <svg class="rel" width="14" height="14" viewBox="0 0 14 14"><path d="M11.800 9a5.300 5.300 0 1 1-1-6.200L12.500 4.500" fill="none" stroke="#333" stroke-width="1.700" /><path d="M13.300.5v5h-5z" fill="#333" /></svg>
        <div class="omni">
          <span class="tune"><svg width="13" height="12" viewBox="0 0 13 12" fill="none" stroke="#222" stroke-width="1.500"><path d="M6 2.500h6M1 9h6" /><circle cx="2.600" cy="2.500" r="1.700" /><circle cx="10.400" cy="9" r="1.700" /></svg></span>
          <span class="url">wow.intermx.io<em>/population</em></span>
          <div class="oicons">
            <svg width="17" height="16" viewBox="0 0 17 16" fill="none" stroke="#4a4a4a" stroke-width="1.600"><path d="M9 1.500H1.500v10h14V9M5.500 14.200h6M13 0v6M10.500 4L13 6.500 15.500 4" /></svg>
            <svg width="15" height="15" viewBox="0 0 15 15" fill="none" stroke="#4a4a4a" stroke-width="1.700"><circle cx="5.800" cy="5.800" r="4.700" /><path d="M9.300 9.300l5 5M3.600 5.800H8" /></svg>
            <svg width="16" height="15" viewBox="0 0 16 15"><path d="M8 1.600l1.900 4.100 4.600.5-3.400 3.100 1 4.500L8 11.500l-4.100 2.300 1-4.500L1.500 6.200l4.600-.5z" fill="none" stroke="#444" stroke-width="1.500" /></svg>
          </div>
        </div>
        <svg class="panelic" width="14" height="14" viewBox="0 0 14 14"><rect x=".8" y=".8" width="12.400" height="12.400" rx="1" fill="none" stroke="#333" stroke-width="1.600" /><path d="M8.500 1h5v12h-5z" fill="#333" /></svg>
        <svg class="person" width="20" height="20" viewBox="0 0 20 20"><circle cx="10" cy="10" r="10" fill="#cfe0fb" /><circle cx="10" cy="7" r="3" fill="#2200cc" /><path d="M4 16v-1.500q0-3.500 6-3.500t6 3.500V16z" fill="#2200cc" /></svg>
        <div class="relaunch">Relaunch to update<svg width="4" height="14" viewBox="0 0 4 14" fill="#fff"><circle cx="2" cy="2" r="1.500" /><circle cx="2" cy="7" r="1.500" /><circle cx="2" cy="12" r="1.500" /></svg></div>
      </div>

      <div class="page">
        <header>
          <div class="brand">{@render logo(24)}<h1>POPULATION</h1><span class="avatar">CM</span>
            <svg width="15" height="18" viewBox="0 0 15 18" fill="none" stroke="#004a8f" stroke-width="1.700"><path d="M.5 14.200h14M2.800 14V8a4.700 4.700 0 0 1 9.400 0v6M7.500 3V.8" /><path d="M6 16.500h3" stroke-width="2" /></svg></div>
          <nav><b class="sel">DEFINE POPCAST™</b><b class="n2">FILTER SELECTION</b><b class="n3">LAYERS &amp; DISPLAY OPTIONS</b><b class="n4">ACTIONS</b></nav>
        </header>

        <div class="work">
          <aside class="rail">
            {#each side as it}
              <div class="cell" class:on={it.on}>
                <svg width={it.size ?? 16} height={it.size ?? 16} viewBox="0 0 24 24" fill="none">
                  {#if it.f}<path d={it.f} fill="#fff" fill-rule="evenodd" />{:else}<path d={it.s} stroke="#fff" stroke-width={it.w ?? 2.2} />{/if}
                </svg>
              </div>
            {/each}
            <div class="cell help"><svg width="16" height="16" viewBox="0 0 24 24"><path d={helpPath} fill="#fff" /></svg></div>
          </aside>

          <section class="builder">
            <div class="modes"><span class="any">POPCAST™ ANYTIME</span><span class="home">POPCAST™ AT HOME</span>{@render info(16)}</div>
            <div class="bluehead">Select Population<svg width="8" height="6" viewBox="0 0 8 6"><path d="M.7 5L4 1.300 7.300 5" fill="none" stroke="#fff" stroke-width="1.300" /></svg></div>
            <div class="subtabs"><b class="saved">SAVED AUDIENCES</b><div class="pop"><b>POPULATION</b>{@render info(12)}</div></div>
            <div class="scroller">
              <div class="content">
                <div class="untitled">Untitled<svg width="11" height="11" viewBox="3 3 18 18"><path d="M3 17.250V21h3.750L17.810 9.940l-3.750-3.750L3 17.250zM20.710 7.040c.390-.390.390-1.020 0-1.410l-2.340-2.340c-.390-.390-1.020-.390-1.410 0l-1.830 1.830 3.750 3.750 1.830-1.830z" fill="#ccc" /></svg></div>
                <div class="searchbox"><svg width="16" height="16" viewBox="0 0 24 24"><path d="M15.500 14h-.79l-.28-.27C15.410 12.590 16 11.110 16 9.500 16 5.910 13.090 3 9.500 3S3 5.910 3 9.500 5.910 16 9.500 16c1.610 0 3.090-.59 4.230-1.570l.27.28v.79l5 4.990L20.490 19l-4.990-5zm-6 0C7.010 14 5 11.990 5 9.500S7.010 5 9.500 5 14 7.010 14 9.500 11.990 14 9.500 14z" fill="#111" stroke="#111" stroke-width=".5" /></svg><span>Search demographics, behaviors, etc</span></div>
                <div class="tree">
                  {#each rows as [name, hasInfo]}
                    <div class="row"><svg width="5" height="8" viewBox="0 0 5 8"><path d="M.7.7L4 4 .7 7.300" fill="none" stroke="#555" stroke-width="1.100" /></svg><span>{name}</span>{#if hasInfo}{@render info(11)}{/if}</div>
                  {/each}
                </div>
                <p class="hint">Add target characteristics above to select or save specific audience.</p>
              </div>
              <div class="sbar"><svg width="8" height="4" viewBox="0 0 8 4"><path d="M0 4h8L4 0z" fill="#a3a3a3" /></svg><i></i><svg width="8" height="4" viewBox="0 0 8 4"><path d="M0 0h8L4 4z" fill="#505050" /></svg></div>
            </div>
            <div class="actions">
              <span class="cohorts"><svg width="13" height="12" viewBox="0 0 13 12" fill="none" stroke="#111" stroke-width="1.700"><path d="M4.500 1.500L1.200 6 4 10.500h2M4 4.500l5 6.500 2.800-5L8.500 1.300M6 1l4 5.500" /></svg>CUSTOM COHORTS AVAILABLE</span>
              <span class="clear">CLEAR ALL</span><span class="apply">APPLY</span>
            </div>
            <div class="bluefoot">Define and Filter Geography<svg width="8" height="6" viewBox="0 0 8 6"><path d="M.7 1L4 4.700 7.300 1" fill="none" stroke="#fff" stroke-width="1.300" /></svg></div>
          </section>

          <section class="map">
            <svg class="world" width="525" height="574" viewBox="556 194 525 574">
              <rect x="556" y="194" width="525" height="574" fill="#deeef5" />
              {#each land as d}<path {d} fill="#fff" />{/each}
              {#each water as d}<path {d} fill="#deeef5" />{/each}
              {#each borders as d}<path {d} fill="none" stroke="#8f8f8f" stroke-width=".75" stroke-dasharray="4 .6" />{/each}
              <clipPath id="us"><path d={usa} /></clipPath>
              <path d={usa} fill="#4ea3cb" stroke="#1c2a33" stroke-width="1.100" />
              <g clip-path="url(#us)"><path d={mesh} fill="none" stroke="#14222c" stroke-width=".6" /></g>
              <path d="M568 442l3-3 4 1 1 4-3 3-1 8-2 7-3 1-2-6z" fill="#deeef5" />
              <path d="M583 540.500l6 .5M628 463l5 -1.500M631 460v4" stroke="#222" />
              {#each labels as [name, x, y, w, mx, my, small]}
                {#if mx}<circle cx={mx} cy={my} r="2.600" fill="#fff" stroke="#888" stroke-width=".6" /><circle cx={mx} cy={my} r="1.500" fill="#555" />{/if}
                <text {x} {y} textLength={w} font-size={small ? 7.400 : 8.200} class="lab">{name}</text>
              {/each}
            </svg>
            <div class="collapse"><svg width="4" height="6" viewBox="0 0 4 6"><path d="M4 0v6L0 3z" fill="#fff" /></svg></div>
            <div class="expand"><svg width="4" height="6" viewBox="0 0 4 6"><path d="M0 0v6l4-3z" fill="#111" /></svg></div>
            <div class="library">
              <div class="item"><div class="it"><svg width="20" height="20" viewBox="0 0 20 20"><path d="M2 3h16v12H2z" fill="none" stroke="#008fd7" stroke-width="1.800" /><path d="M7 15h6v2.500H7z" fill="#008fd7" /></svg><span>Inventory Library</span></div><small>Search inventories from around the nation</small></div>
              <div class="item hot"><div class="it"><svg width="20" height="20" viewBox="0 0 24 24"><circle cx="12" cy="12" r="10" fill="#fff" /><circle cx="9.200" cy="9.700" r="2.200" fill="#008fd7" /><circle cx="15.800" cy="10" r="1.700" fill="#008fd7" /><path d="M3.900 14.500q3-2.300 6.500-1.800-2.400 1.200-2.400 3.500v3Q4.500 18 3.900 14.500zM12.500 20.500V16q3-2.700 7-1.500Q18.500 19.500 12.500 20.500z" fill="#008fd7" /></svg><span>Population Library</span></div><small>View audience profiles &amp; geographies</small></div>
              <div class="item"><div class="it"><svg width="20" height="20" viewBox="0 0 24 24"><path d={place} fill="#008fd7" /></svg><span>Places Library</span></div><small>Search company name, brand or place type</small></div>
              <svg class="close" width="16" height="16" viewBox="0 0 16 16"><circle cx="8" cy="8" r="8" fill="#555" /><path d="M4 4l8 8M12 4l-8 8" stroke="#fff" stroke-width="1.600" /></svg>
            </div>
            <div class="controls">
              <div class="key">KEY</div>
              <div class="zoom"><span><svg width="8" height="8" viewBox="0 0 8 8"><path d="M4 0v8M0 4h8" stroke="#222" stroke-width="2" /></svg></span><span><svg width="8" height="8" viewBox="0 0 8 8"><path d="M0 4h8" stroke="#bbb" stroke-width="1.500" /></svg></span></div>
              <div class="full"><svg width="12" height="12" viewBox="0 0 12 12" fill="#444" stroke="#444"><path d="M.5 3.500v-3h3zM8.500.5h3v3zM11.500 8.500v3h-3zM3.500 11.500h-3v-3z" stroke-width=".3" /><path d="M1 1l3.500 3.500M11 1L7.500 4.500M11 11L7.500 7.500M1 11l3.500-3.500" /></svg></div>
              <div class="locate"><svg width="12" height="12" viewBox="0 0 12 12" fill="none" stroke="#888"><circle cx="6" cy="6" r="4.200" stroke-width="1.500" /><circle cx="6" cy="6" r="1.700" fill="#888" /><path d="M6 0v2M6 10v2M0 6h2M10 6h2" /></svg></div>
            </div>
            <div class="legend"><h4>Target Composition %</h4>
              {#each swatches as c, i}<div class="sw"><i style="background:{c}"></i>{#if i === 0}<b>Highest</b>{:else if i === 5}<b>Lowest</b>{/if}</div>{/each}
            </div>
            <div class="attrib">© Mapbox © OpenStreetMap <b>Improve this map</b></div>
          </section>

          <section class="geo">
            <div class="gtitle"><b>MAPPED GEOGRAPHY SET</b><span>Geography Set</span></div>
            <div class="stats">{#each stats as [v, a, b]}<div><span>{v}</span><b>{a}<br />{b}</b></div>{/each}</div>
            <div class="filters">
              <span class="f1">Composition Percentage: High-L...<svg width="9" height="6" viewBox="0 0 8 6"><path d="M.7 1L4 4.400 7.300 1" fill="none" stroke="#222" stroke-width="1.700" /></svg></span>
              <span class="f2">Filter:</span><span class="f3">All<svg width="9" height="6" viewBox="0 0 8 6"><path d="M.7 1L4 4.400 7.300 1" fill="none" stroke="#222" stroke-width="1.700" /></svg></span>
              <span class="f4">View as Table</span>
            </div>
            <div class="listing">
              <div class="cards">
                {#each cards as [city, n]}
                  <div class="card">
                    <svg width="62" height="62" viewBox="0 0 62 62"><circle cx="31" cy="31" r="26.600" fill="none" stroke="#008fd7" stroke-width="8.600" /><text x="16.500" y="35" class="pct">100</text><text x="40.500" y="35" class="pc">%</text></svg>
                    <div class="cbody">
                      <div class="city"><span class="box"><svg width="9" height="8" viewBox="0 0 9 8"><path d="M.7 4l2.500 2.500L8.300 1" fill="none" stroke="#111" stroke-width="1.200" /></svg></span>{city}</div>
                      <div class="ix">Index 100</div>
                      <div class="co">Cohort Avg. Hour {n}</div>
                      <div class="lk"><svg width="12" height="14" viewBox="0 0 12 14" fill="none" stroke="#008fd7"><path d="M6 13.300C3 9.500.8 8 .8 5.400a5.200 5.200 0 0 1 10.400 0C11.200 8 9 9.500 6 13.300z" /><circle cx="6" cy="5.300" r="1.700" /></svg><span class="mv">MAP VIEW</span>
                        <svg class="star" width="14" height="14" viewBox="0 0 14 14"><path d="M7 .5l1.700 4.600 4.800.2-3.800 3 1.400 4.900L7 10.500l-4.100 2.700 1.400-4.900-3.800-3 4.800-.2z" fill="#008fd7" /></svg><span class="se">SELECT</span></div>
                    </div>
                  </div>
                {/each}
              </div>
              <div class="sbar r"><svg width="8" height="4" viewBox="0 0 8 4"><path d="M0 4h8L4 0z" fill="#a3a3a3" /></svg><i></i><svg width="8" height="4" viewBox="0 0 8 4"><path d="M0 0h8L4 4z" fill="#505050" /></svg></div>
            </div>
            <div class="gfoot">
              <svg width="13" height="8" viewBox="0 0 13 8"><path d="M0 1h2M0 4h2M0 7h2M3.500 1H13M3.500 4H13M3.500 7H13" stroke="#fff" stroke-width="1.500" /></svg>
              <svg width="10" height="12" viewBox="5 3 14 17"><path d="M19 9h-4V3H9v6H5l7 7 7-7zM5 18v2h14v-2H5z" fill="#fff" /></svg>
              <svg width="12" height="12" viewBox="3 3 18 18"><path d="M17 3H5c-1.110 0-2 .9-2 2v14c0 1.100.89 2 2 2h14c1.100 0 2-.9 2-2V7l-4-4zm-5 16c-1.660 0-3-1.340-3-3s1.340-3 3-3 3 1.340 3 3-1.340 3-3 3zm3-10H5V5h10v4z" fill="#fff" /></svg>
            </div>
          </section>
        </div>
      </div>
    </div>
  </div>
</div>

<style>
  :global(body) { margin: 0; overflow: hidden; }
  * { box-sizing: border-box; }
  svg { display: block; flex: none; }
  .desktop { width: 1366px; height: 768px; display: flex; flex-direction: column; overflow: hidden; font-family: Inter, sans-serif; color: #333; white-space: nowrap; }
  .topbar { height: 27px; flex: none; background: #1d1d1d; display: flex; align-items: center; color: #e8e8e8; font: 14px/27px "Noto Sans", sans-serif; padding-left: 12px; }
  .activities { width: 97px; font-size: 14.500px; letter-spacing: .25px; }
  .appname { margin-left: 6px; width: 109px; letter-spacing: .05px; }
  .clock { margin-left: 416px; width: 90px; font-size: 14px; letter-spacing: -.05px; }
  .tray { display: flex; align-items: center; margin-left: 378px; }
  .t2 { margin-left: 24px; } .t3 { margin-left: 24px; } .t4 { margin-left: 28px; } .t5 { margin-left: 13px; } .t6 { margin-left: 12px; } .t7 { margin-left: 10px; }
  .t2 text { font-family: Roboto, sans-serif; }
  .below { flex: 1; display: flex; min-height: 0; }
  .dock { width: 52px; flex: none; padding-top: 2px; background: linear-gradient(#4a2022, #3a1c2b 25%, #2d152a 55%, #24122a 80%, #211722); display: flex; flex-direction: column; align-items: center; }
  .slot { width: 52px; height: 48px; flex: none; display: flex; align-items: center; padding-left: 4px; }
  .slot.current { width: 44px; height: 44px; margin: 2px 0; padding-left: 0; background: #4e3b4d; border-radius: 4px; }
  .dots { width: 8px; display: flex; flex-direction: column; gap: 2px; }
  .dots i { width: 4px; height: 4px; border-radius: 50%; background: #e95420; }
  .grid9 { margin-top: 33px; }
  .browser { flex: 1; min-width: 0; display: flex; flex-direction: column; }
  .tabstrip { height: 40px; flex: none; background: #33302f; border-top: 1px solid #4a4846; display: flex; align-items: center; padding-left: 6px; font: 14px "Noto Sans", sans-serif; color: #ddd; }
  .search-tabs { width: 28px; height: 28px; margin-right: 5px; background: #f7f7f7; border-radius: 9px; display: flex; align-items: center; justify-content: center; flex: none; }
  .tab { width: 51.130px; height: 16px; flex: none; padding-left: 9px; display: flex; align-items: center; gap: 9px; border-right: 2px solid #fff; }
  .tab.nosep { border-color: transparent; }
  .cut { width: 5px; overflow: hidden; display: block; line-height: 16px; flex: none; }
  .active-tab { width: 45px; height: 34px; margin: 5px 4px 0 1px; align-self: flex-start; background: #f7f7f7; border-radius: 10px 10px 0 0; padding: 0 0 7px 9px; color: #444; display: flex; align-items: center; gap: 11px; flex: none; }
  .active-tab .cut { font-size: 13px; }
  .imx { background: #fff; }
  .plus { margin-left: 9px; }
  .winctl { display: flex; align-items: center; gap: 32px; margin-left: 75px; }
  .winctl svg:last-child { margin-left: -5px; }
  .toolbar { height: 47px; flex: none; background: #f7f7f7; border-bottom: 1px solid #c3c3c3; border-radius: 8px 8px 0 0; display: flex; align-items: center; padding-left: 16px; box-shadow: 0 -8px 0 #33302f; }
  .fwd { margin-left: 23px; } .rel { margin-left: 22px; }
  .omni { width: 927px; height: 34px; margin-left: 19px; border-radius: 17px; background: #fff; display: flex; align-items: center; padding-left: 5px; flex: none; }
  .tune { width: 24px; height: 24px; border-radius: 50%; background: #f5f5f5; display: flex; align-items: center; justify-content: center; }
  .url { margin-left: 8px; width: 794px; font: 14.500px "Noto Sans", sans-serif; color: #111; letter-spacing: -.52px; }
  .url em { font-style: normal; color: #777; }
  .oicons { display: flex; align-items: center; gap: 17px; }
  .panelic { margin-left: 19px; } .person { margin-left: 19px; }
  .relaunch { width: 177px; height: 34px; margin-left: 12px; border-radius: 17px; background: #33302f; color: #f2f2f2; font: 14px "Noto Sans", sans-serif; letter-spacing: .27px; display: flex; align-items: center; padding-left: 15px; gap: 8px; flex: none; }
  .page { flex: 1; min-height: 0; display: flex; flex-direction: column; background: #fff; }
  header { height: 80px; flex: none; }
  .brand { height: 53px; display: flex; align-items: center; padding: 3px 0 0 14px; }
  h1 { margin: 0 0 0 9px; width: 1195px; font-size: 14.300px; line-height: 18px; padding-bottom: 2px; font-weight: 400; color: #444; flex: none; }
  .avatar { width: 27px; height: 27px; border-radius: 50%; background: #006db3; color: #fff; font-size: 12px; display: flex; align-items: center; justify-content: center; margin-right: 16px; flex: none; }
  nav { height: 27px; padding-left: 27px; display: flex; align-items: center; font-size: 7px; letter-spacing: .83px; color: #666; }
  .sel { width: 90px; height: 27px; line-height: 27px; background: #008fd7; color: #fff; padding-left: 6px; letter-spacing: .8px; }
  .n2 { width: 90px; margin-left: 7px; } .n3 { width: 131px; }
  .work { flex: 1; min-height: 0; display: flex; }
  .rail { width: 27px; flex: none; background: #202020; display: flex; flex-direction: column; }
  .cell { height: 26.630px; flex: none; border-bottom: 1px solid #8d8d8d; display: flex; align-items: center; justify-content: center; }
  .cell.on { background: #008fd7; }
  .help { margin-top: auto; border-top: 1px solid #8d8d8d; }
  .builder { width: 477px; flex: none; border-right: 1px solid #b5b5b5; display: flex; flex-direction: column; background: #fdfdfd; }
  .info { fill: none; stroke: #aaa; stroke-width: 1.200; }
  .modes { height: 25px; flex: none; display: flex; align-items: center; padding: 1px 3px 0 6px; font-size: 9.550px; color: #777; background: #fff; box-shadow: inset 0 2px 2px #e3e3e3; }
  .any { width: 110px; } .home { color: #008fd7; border-bottom: 1px solid #008fd7; line-height: 15px; } .any, .home { position: relative; top: -.5px; } .modes :global(.info) { margin-left: auto; }
  .bluehead, .bluefoot { flex: none; background: #008fd7; color: #fff; font-size: 11.850px; display: flex; align-items: center; justify-content: space-between; padding: 0 9px 0 5px; }
  .bluehead { height: 43px; } .bluehead svg { margin-bottom: 4px; } .bluefoot { height: 42px; font-size: 11.750px; } .bluefoot svg { margin-top: 4px; }
  .subtabs { height: 32px; flex: none; background: #fff; display: flex; font-size: 7.200px; letter-spacing: .75px; color: #888; box-shadow: 0 1px 3px #999; z-index: 1; line-height: 31px; }
  .saved { width: 110px; padding-left: 16px; }
  .pop { width: 107px; padding-left: 19px; display: flex; align-items: center; gap: 7px; border-bottom: 1px solid #008fd7; }
  .scroller { height: 381px; flex: none; display: flex; }
  .content { width: 461px; padding: 13px 13px 0 13px; }
  .untitled { height: 16px; display: flex; align-items: center; gap: 5px; font-size: 12px; color: #444; }
  .untitled svg { margin-top: 3px; }
  .searchbox { height: 30px; margin-top: 12px; border-bottom: 1px solid #888; display: flex; align-items: center; gap: 7px; font-size: 9.550px; color: #888; letter-spacing: .2px; }
  .tree { margin-top: 11px; }
  .row { height: 27.700px; display: flex; align-items: center; gap: 6px; padding-left: 3px; font-size: 9.270px; color: #333; border-bottom: 1px solid #e5e5e5; }
  .row:last-child { border-color: transparent; }
  .hint { margin: 9px 0 0; font-size: 9.300px; line-height: 12px; font-weight: 700; letter-spacing: .13px; color: #7d7d7d; }
  .sbar { width: 15px; background: #f1f1f1; display: flex; flex-direction: column; align-items: center; padding: 6px 0; }
  .sbar i { width: 11px; height: 333px; margin-top: 5px; background: #c1c1c1; } .sbar svg:last-child { margin-top: auto; }
  .sbar.r { width: 14px; } .sbar.r i { height: 30px; }
  .actions { height: 51px; flex: none; margin-left: 13px; padding-right: 6px; border-top: 1px solid #e3e3e3; display: flex; align-items: center; font-size: 9.300px; }
  .cohorts { width: 167px; height: 24px; background: #86efac; border: 1px solid #111; border-radius: 3px; display: flex; align-items: center; padding-left: 8px; gap: 4px; color: #222; font-size: 8.850px; margin-right: 162px; flex: none; }
  .clear, .apply { height: 24px; line-height: 24px; border-radius: 2px; font-weight: 600; text-align: center; box-shadow: 0 1px 2px #999; }
  .clear { width: 71px; background: #fff; color: #666; } .apply { width: 51px; background: #008fd7; color: #fff; margin-left: 6px; }
  .map { width: 525px; flex: none; position: relative; overflow: hidden; }
  .lab { font-family: Inter, sans-serif; font-weight: 600; fill: #a0a0a0; paint-order: stroke; stroke: #fff; stroke-width: .8px; stroke-opacity: .5; }
  .collapse { position: absolute; left: 0; top: 17px; width: 9px; height: 29px; background: #008fd7; display: flex; align-items: center; justify-content: center; }
  .expand { position: absolute; right: 1px; top: 1px; width: 15px; height: 29px; background: #fff; display: flex; align-items: center; justify-content: center; box-shadow: 0 1px 2px #999; }
  .library { position: absolute; left: 16px; top: 13px; width: 192px; background: #fff; border-radius: 3px; box-shadow: 0 1px 5px #888; }
  .item { height: 55.300px; padding: 10px 0 0 10px; color: #008fd7; }
  .item:first-child { height: 55.700px; }
  .item.hot { background: #008fd7; color: #fff; }
  .it { display: flex; align-items: center; height: 20px; gap: 7px; font-size: 12.100px; letter-spacing: .08px; }
  .it span { margin-top: -1px; }
  .item small { display: block; margin-top: 2px; font-size: 8.200px; line-height: 14px; letter-spacing: -.5px; }
  .close { position: absolute; right: -7px; top: -8px; }
  .controls { position: absolute; left: 5px; top: 395px; width: 21px; display: flex; flex-direction: column; align-items: center; }
  .controls > div { width: 20px; background: #fff; border-radius: 3px; box-shadow: 0 0 0 1px #cfd6d9; display: flex; align-items: center; justify-content: center; }
  .controls .key { height: 19px; font-size: 8.300px; color: #777; }
  .controls .zoom { margin-top: 5px; height: 39px; flex-direction: column; }
  .zoom span { height: 20px; width: 20px; display: flex; align-items: center; justify-content: center; } .zoom span + span { border-top: 1px solid #ddd; height: 19px; }
  .controls .full { margin-top: 6px; height: 19px; }
  .controls .locate { margin-top: 5px; height: 19px; border-radius: 50%; }
  .legend { position: absolute; right: 8px; top: 403px; width: 113px; height: 128px; background: #fff; border-radius: 3px; box-shadow: 0 1px 3px #888; padding: 6px 0 0 10px; }
  .legend h4 { margin: 0 0 6px; font-size: 8.950px; font-weight: 400; line-height: 12px; color: #333; }
  .sw { height: 15.400px; display: flex; align-items: center; padding-left: 3px; gap: 4px; font-size: 9px; color: #222; } .sw i { width: 12px; height: 12px; }
  h4 + .sw { margin-bottom: 1.300px; }
  .attrib { position: absolute; right: 0; bottom: 0; width: 213px; height: 13px; background: rgba(255,255,255,.6); font-size: 9.050px; line-height: 13px; padding-left: 4px; color: #444; }
  .geo { flex: 1; min-width: 0; display: flex; flex-direction: column; }
  .gtitle { height: 46px; flex: none; background: #004a8f; color: #fff; padding: 9px 0 0 7px; display: flex; flex-direction: column; font-size: 12.800px; line-height: 16px; letter-spacing: .3px; }
  .gtitle b { font-size: 7px; line-height: 10px; margin-bottom: 7px; letter-spacing: .2px; }
  .stats { height: 61px; flex: none; background: #009fe4; color: #fff; display: grid; grid-template-columns: 70px 66px 67px 1fr; padding: 12px 0 0 13px; }
  .stats span { display: block; font-size: 16px; line-height: 19px; letter-spacing: .3px; font-weight: 300; }
  .stats b { display: block; font-size: 6.600px; line-height: 9px; letter-spacing: .2px; color: #a5dcf7; }
  .filters { height: 27px; flex: none; display: flex; padding: 0 0 0 7px; font-size: 8.700px; line-height: 24px; color: #444; letter-spacing: -.08px; }
  .filters svg { position: relative; top: 1px; }
  .f1 { width: 144px; height: 24px; border-bottom: 1px solid #ddd; display: flex; align-items: center; justify-content: space-between; letter-spacing: -.22px; flex: none; }
  .f2 { margin-left: 6px; width: 25px; height: 23px; line-height: 25px; border-bottom: 1px solid #ddd; } .f3 { width: 31px; height: 24px; border-bottom: 1px solid #ddd; display: flex; align-items: center; justify-content: space-between; }
  .f4 { margin-left: 6px; font-size: 7.500px; line-height: 26px; color: #008fd7; letter-spacing: .1px; }
  .listing { height: 409px; flex: none; display: flex; justify-content: space-between; overflow: hidden; }
  .cards { padding: 3px 0 0 7px; }
  .card { width: 257px; height: 96px; margin-bottom: 6.800px; border-left: 8px solid #008fd7; background: #fff; box-shadow: 0 1px 4px #dcdcec; display: flex; align-items: center; padding-left: 7px; padding-bottom: 4px; }
  .pct { font-size: 12.600px; fill: #444; letter-spacing: .6px; } .pc { font-size: 6px; fill: #444; }
  .cbody { margin-left: 12px; height: 96px; padding-top: 7px; font-size: 9.300px; letter-spacing: .3px; color: #222; align-self: flex-start; }
  .city { display: flex; align-items: center; height: 14px; gap: 6px; letter-spacing: .23px; }
  .box { width: 13px; height: 13px; border: 1px solid #222; display: flex; align-items: center; justify-content: center; position: relative; top: 1px; }
  .ix { margin-top: 10px; line-height: 14px; } .co { margin-top: 6.500px; line-height: 14px; }
  .lk { display: flex; align-items: center; height: 14px; margin-top: 5px; color: #008fd7; letter-spacing: 0; font-size: 9.200px; }
  .mv { margin-left: 7px; width: 75px; } .mv, .se { line-height: 12px; padding-bottom: 1px; } .star { margin-right: 6px; }
  .gfoot { margin-top: 2px; flex: 1; background: #009fe4; display: flex; align-items: center; padding: 0 0 3px 33px; } .gfoot svg + svg { margin-left: 78px; } .gfoot svg:last-child { margin-left: 91px; margin-top: 4px; }
</style>
